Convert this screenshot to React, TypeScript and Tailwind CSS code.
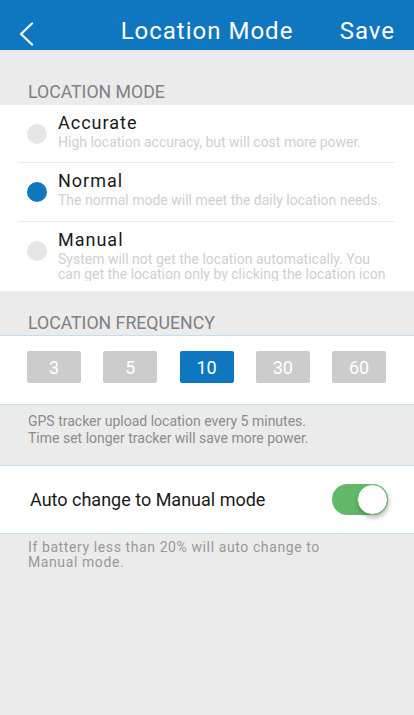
import { useState } from "react";

const modes = [
  {
    key: "accurate",
    title: "Accurate",
    desc: "High location accuracy, but will cost more power.",
    h: "h-[57px]",
  },
  {
    key: "normal",
    title: "Normal",
    desc: "The normal mode will meet the daily location needs.",
    h: "h-[58px]",
  },
  {
    key: "manual",
    title: "Manual",
    desc: "System will not get the location automatically. You can get the location only by clicking the location icon",
    h: "h-[69px]",
  },
];

const freqs = [3, 5, 10, 30, 60];

function Chevron() {
  return (
    <svg width="16" height="24" viewBox="0 0 16 24" fill="none">
      <polyline
        points="14,1.5 3,12 14,22.5"
        stroke="white"
        strokeWidth="2.2"
        strokeLinecap="round"
        strokeLinejoin="round"
      />
    </svg>
  );
}

export default function App() {
  const [mode, setMode] = useState("normal");
  const [freq, setFreq] = useState(10);
  const [auto, setAuto] = useState(true);

  return (
    <div className="w-[414px] h-[715px] bg-[#ebebeb] font-['Roboto',sans-serif] overflow-hidden">
      {/* header */}
      <div className="h-[50px] bg-[#0f77c0] flex items-start text-white">
        <div className="w-[80px] pl-[18px] pt-[22px]">
          <Chevron />
        </div>
        <div className="flex-1 text-center text-[24px] leading-[28px] tracking-[1px] pt-[17px]">Location Mode</div>
        <div className="w-[80px] text-right pr-[19px] text-[24px] leading-[28px] tracking-[1px] pt-[17px]">Save</div>
      </div>

      {/* location mode */}
      <div className="h-[55px] px-[28px] pt-[33px] text-[17.7px] leading-[18px] text-[#808080]">
        LOCATION MODE
      </div>
      <div className="bg-white">
        {modes.map((m, i) => (
          <div key={m.key}>
            {i > 0 && <div className="ml-[18px] mr-[19px] h-px bg-[#ececec]" />}
            <div className={`${m.h} flex items-start cursor-pointer overflow-hidden`} onClick={() => setMode(m.key)}>
              <div className="w-[58px] h-[58px] flex items-center pl-[27px]">
                <div
                  className={`w-[20px] h-[20px] rounded-full ${
                    mode === m.key ? "bg-[#0f77c0]" : "bg-[#e6e6e6]"
                  }`}
                />
              </div>
              <div className="flex-1 pr-[22px] pt-[8px]">
                <div className="text-[18px] leading-[20px] tracking-[1px] text-[#1a1a1a]">{m.title}</div>
                <div className="mt-[2px] text-[14px] leading-[15px] text-[#cfcfcf] max-h-[29px] overflow-hidden">
                  {m.desc}
                </div>
              </div>
            </div>
          </div>
        ))}
      </div>

      {/* location frequency */}
      <div className="h-[44px] px-[28px] pt-[23px] text-[17.7px] leading-[18px] text-[#808080]">
        LOCATION FREQUENCY
      </div>
      <div className="bg-white border-y border-[#c2dff2] h-[70px] flex items-start justify-between pt-[15px] pl-[27px] pr-[28px]">
        {freqs.map((f) => (
          <button
            key={f}
            onClick={() => setFreq(f)}
            className={`w-[54px] h-[32px] rounded-[2px] text-white text-[18px] ${
              freq === f ? "bg-[#0f77c0]" : "bg-[#cccccc]"
            }`}
          >
            {f}
          </button>
        ))}
      </div>
      <div className="h-[60px] px-[28px] pt-[8px] text-[14px] leading-[17px] text-[#8c8c8c]">
        GPS tracker upload location every 5 minutes.
        <br />
        Time set longer tracker will save more power.
      </div>

      {/* auto change */}
      <div className="bg-white border-y border-[#c2dff2] h-[69px] flex items-center justify-between pl-[30px] pr-[26px]">
        <span className="text-[18px] text-[#1a1a1a]">Auto change to Manual mode</span>
        <button
          onClick={() => setAuto(!auto)}
          className={`relative w-[56px] h-[31px] rounded-full ${auto ? "bg-[#62b866]" : "bg-[#dddddd]"}`}
        >
          <span
            className={`absolute top-0 w-[31px] h-[31px] rounded-full bg-white border border-[#62b866] shadow-[1px_3px_4px_rgba(0,0,0,0.25)] ${
              auto ? "right-0" : "left-0"
            }`}
          />
        </button>
      </div>
      <div className="px-[28px] pt-[6px] text-[14px] leading-[15px] tracking-[0.6px] text-[#999999]">
        If battery less than 20% will auto change to
        <br />
        Manual mode.
      </div>
    </div>
  );
}
